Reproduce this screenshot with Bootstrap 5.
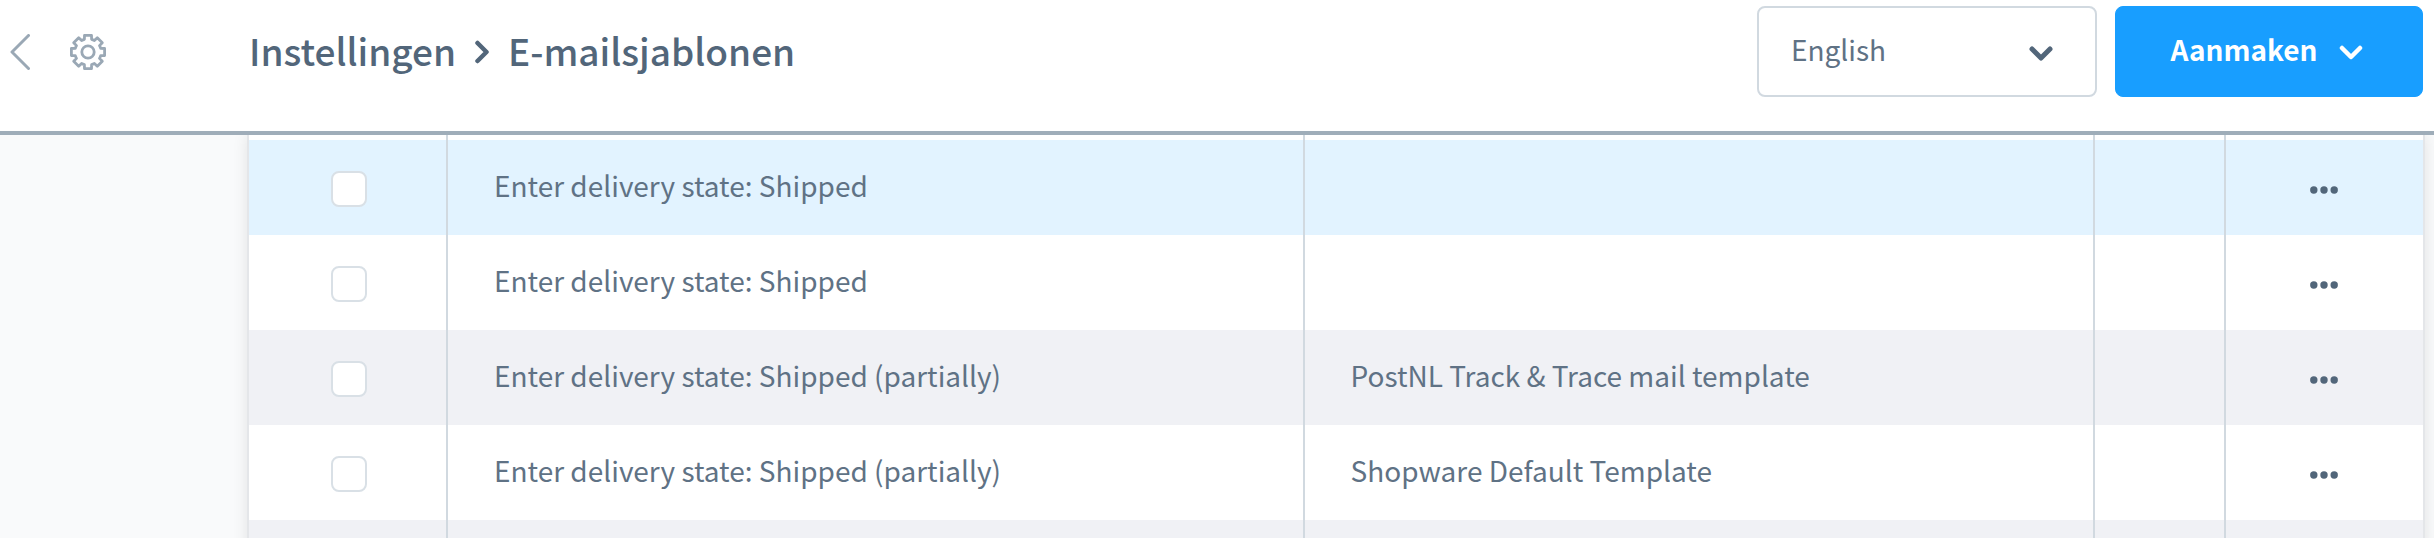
<!DOCTYPE html>
<html lang="nl">
<head>
<meta charset="utf-8">
<meta name="viewport" content="width=device-width, initial-scale=1">
<title>E-mailsjablonen</title>
<link href="https://cdn.jsdelivr.net/npm/bootstrap@5.3.0/dist/css/bootstrap.min.css" rel="stylesheet">
<style>
  body { font-family: "Noto Sans CJK SC", "Open Sans", sans-serif; font-size: 28px; line-height: 40px; color: #52667a; padding-bottom: 8px; }
  .page-head { padding: 6px 11px 34px 10px; border-bottom: 4px solid #9fadb9; }
  .head-tools { width: 239px; gap: 40px; }
  .head-tools a, .head-tools svg { display: block; }
  .crumbs { font-size: 37px; line-height: 48px; font-weight: 500; gap: 18px; }
  .crumbs a { color: inherit; }
  .crumbs a, .crumbs span { padding-bottom: 3px; }
  .head-actions { gap: 18px; }
  .lang-select { width: 340px; height: 91px; padding: 0 80px 5px 32px; font-size: inherit; color: #5f7285; border: 2px solid #d1d9e0; border-radius: 8px;
    background: #fff url("data:image/svg+xml,%3Csvg xmlns='http://www.w3.org/2000/svg' viewBox='0 0 24 16'%3E%3Cpath d='M3 3l9 9 9-9' fill='none' stroke='%2352667a' stroke-width='5' stroke-linecap='round' stroke-linejoin='round'/%3E%3C/svg%3E") no-repeat right 42px top 38px / 24px 16px; }
  .create-btn { width: 308px; height: 91px; padding: 0 16px 0 12px; gap: 22px; font-size: inherit; font-weight: 700; border-radius: 8px; --bs-btn-bg: #189eff; --bs-btn-border-color: #189eff; }
  .create-btn span { padding-bottom: 5px; }
  .page-body { min-height: 0; padding: 0 11px 0 249px; background: #f9fafb; }
  .grid-card { background: #fff; box-shadow: 0 0 0 2px #e4e6e9, 0 0 16px rgba(0, 0, 0, .12); }
  .mail-grid { table-layout: fixed; --bs-table-bg: transparent; color: inherit; border-collapse: separate; border-spacing: 0; }
  .mail-grid tr { height: 95px; }
  .mail-grid tr.row-edge { height: 5px; }
  .mail-grid td { padding: 0 46px 5px; vertical-align: middle; border: 0; border-right: 2px solid #d1d9e0; background: #fff; color: #5f7285; box-shadow: none; }
  .mail-grid .row-edge td { padding: 0; }
  .mail-grid td:last-child { border-right: 0; }
  .mail-grid .tinted td { background: #f0f1f5; }
  .mail-grid .hovered td { background: #e2f3ff; }
  .col-check { width: 199px; }
  .col-type { width: 39.4%; }
  .col-extra { width: 131px; }
  .col-menu { width: 197px; }
  .pick { width: 36px; height: 36px; margin: 0; border: 2px solid #d9e0e6; border-radius: 8px !important; display: block; }
  .mail-grid td.pick-cell { padding: 2px 0 0 82px; }
  .mail-grid td.menu-cell { padding: 4px 2px 0 0; }
  .dots { border: 0; padding: 0; display: block; margin: 0 auto; }
  .dots svg { display: block; }
</style>
</head>
<body class="d-flex flex-column vh-100 overflow-hidden bg-white">
<header class="page-head d-flex align-items-center flex-shrink-0">
  <div class="head-tools d-flex align-items-center flex-shrink-0">
    <a href="#" aria-label="Terug"><svg width="20" height="36" viewBox="0 0 20 36" fill="none" stroke="#9aa8b5" stroke-width="3" stroke-linecap="round" stroke-linejoin="round"><path d="M18.500 1.500L2 18l16.500 16.500"/></svg></a>
    <a href="#" aria-label="Instellingen"><svg width="36" height="36" viewBox="0 0 36 36" fill="none" stroke="#9aa8b5" stroke-width="2.800" stroke-linejoin="round"><path d="M14.500 1.400H21.500L21.600 5.300A13 13 0 0 1 24.400 6.500L27.300 3.700L32.300 8.700L29.500 11.600A13 13 0 0 1 30.700 14.400L34.600 14.500V21.500L30.700 21.600A13 13 0 0 1 29.500 24.400L32.300 27.300L27.300 32.300L24.400 29.500A13 13 0 0 1 21.600 30.700L21.500 34.600H14.500L14.400 30.700A13 13 0 0 1 11.600 29.500L8.700 32.300L3.700 27.300L6.500 24.400A13 13 0 0 1 5.300 21.600L1.400 21.500V14.500L5.300 14.400A13 13 0 0 1 6.500 11.600L3.700 8.700L8.700 3.700L11.600 6.500A13 13 0 0 1 14.400 5.300Z"/><circle cx="18" cy="18" r="6.200"/></svg></a>
  </div>
  <nav class="crumbs d-flex align-items-center flex-grow-1" aria-label="Kruimelpad">
    <a href="#" class="text-decoration-none">Instellingen</a>
    <svg width="16" height="24" viewBox="0 0 16 24" fill="none" stroke="#52667a" stroke-width="4.500" stroke-linecap="round" stroke-linejoin="round"><path d="M3.500 3L12.500 12L3.500 21"/></svg>
    <span aria-current="page">E-mailsjablonen</span>
  </nav>
  <div class="head-actions d-flex align-items-center flex-shrink-0">
    <select class="form-select lang-select" aria-label="Taal"><option>English</option></select>
    <button type="button" class="btn btn-primary create-btn d-flex align-items-center justify-content-center"><span>Aanmaken</span>
      <svg width="24" height="16" viewBox="0 0 24 16" fill="none" stroke="#fff" stroke-width="4.500" stroke-linecap="round" stroke-linejoin="round"><path d="M3 4l9 9 9-9"/></svg>
    </button>
  </div>
</header>
<main class="page-body flex-grow-1 overflow-hidden">
  <div class="grid-card">
    <table class="table mail-grid w-100 mb-0">
      <colgroup><col class="col-check"><col class="col-type"><col><col class="col-extra"><col class="col-menu"></colgroup>
      <tbody>
        <tr class="row-edge"><td></td><td></td><td></td><td></td><td></td></tr>
        <tr class="hovered">
          <td class="pick-cell"><input class="form-check-input pick" type="checkbox" aria-label="Selecteer rij 1"></td>
          <td>Enter delivery state: Shipped</td><td></td><td></td>
          <td class="menu-cell"><button type="button" class="dots bg-transparent" aria-label="Acties"><svg width="28" height="8" viewBox="0 0 28 8" fill="#52667a"><circle cx="3.800" cy="4" r="3.700"/><circle cx="14" cy="4" r="3.700"/><circle cx="24.200" cy="4" r="3.700"/></svg></button></td>
        </tr>
        <tr>
          <td class="pick-cell"><input class="form-check-input pick" type="checkbox" aria-label="Selecteer rij 2"></td>
          <td>Enter delivery state: Shipped</td><td></td><td></td>
          <td class="menu-cell"><button type="button" class="dots bg-transparent" aria-label="Acties"><svg width="28" height="8" viewBox="0 0 28 8" fill="#52667a"><circle cx="3.800" cy="4" r="3.700"/><circle cx="14" cy="4" r="3.700"/><circle cx="24.200" cy="4" r="3.700"/></svg></button></td>
        </tr>
        <tr class="tinted">
          <td class="pick-cell"><input class="form-check-input pick" type="checkbox" aria-label="Selecteer rij 3"></td>
          <td>Enter delivery state: Shipped (partially)</td><td>PostNL Track &amp; Trace mail template</td><td></td>
          <td class="menu-cell"><button type="button" class="dots bg-transparent" aria-label="Acties"><svg width="28" height="8" viewBox="0 0 28 8" fill="#52667a"><circle cx="3.800" cy="4" r="3.700"/><circle cx="14" cy="4" r="3.700"/><circle cx="24.200" cy="4" r="3.700"/></svg></button></td>
        </tr>
        <tr>
          <td class="pick-cell"><input class="form-check-input pick" type="checkbox" aria-label="Selecteer rij 4"></td>
          <td>Enter delivery state: Shipped (partially)</td><td>Shopware Default Template</td><td></td>
          <td class="menu-cell"><button type="button" class="dots bg-transparent" aria-label="Acties"><svg width="28" height="8" viewBox="0 0 28 8" fill="#52667a"><circle cx="3.800" cy="4" r="3.700"/><circle cx="14" cy="4" r="3.700"/><circle cx="24.200" cy="4" r="3.700"/></svg></button></td>
        </tr>
        <tr class="tinted"><td></td><td></td><td></td><td></td><td></td></tr>
      </tbody>
    </table>
  </div>
</main>
<script src="https://cdn.jsdelivr.net/npm/bootstrap@5.3.0/dist/js/bootstrap.bundle.min.js"></script>
</body>
</html>
